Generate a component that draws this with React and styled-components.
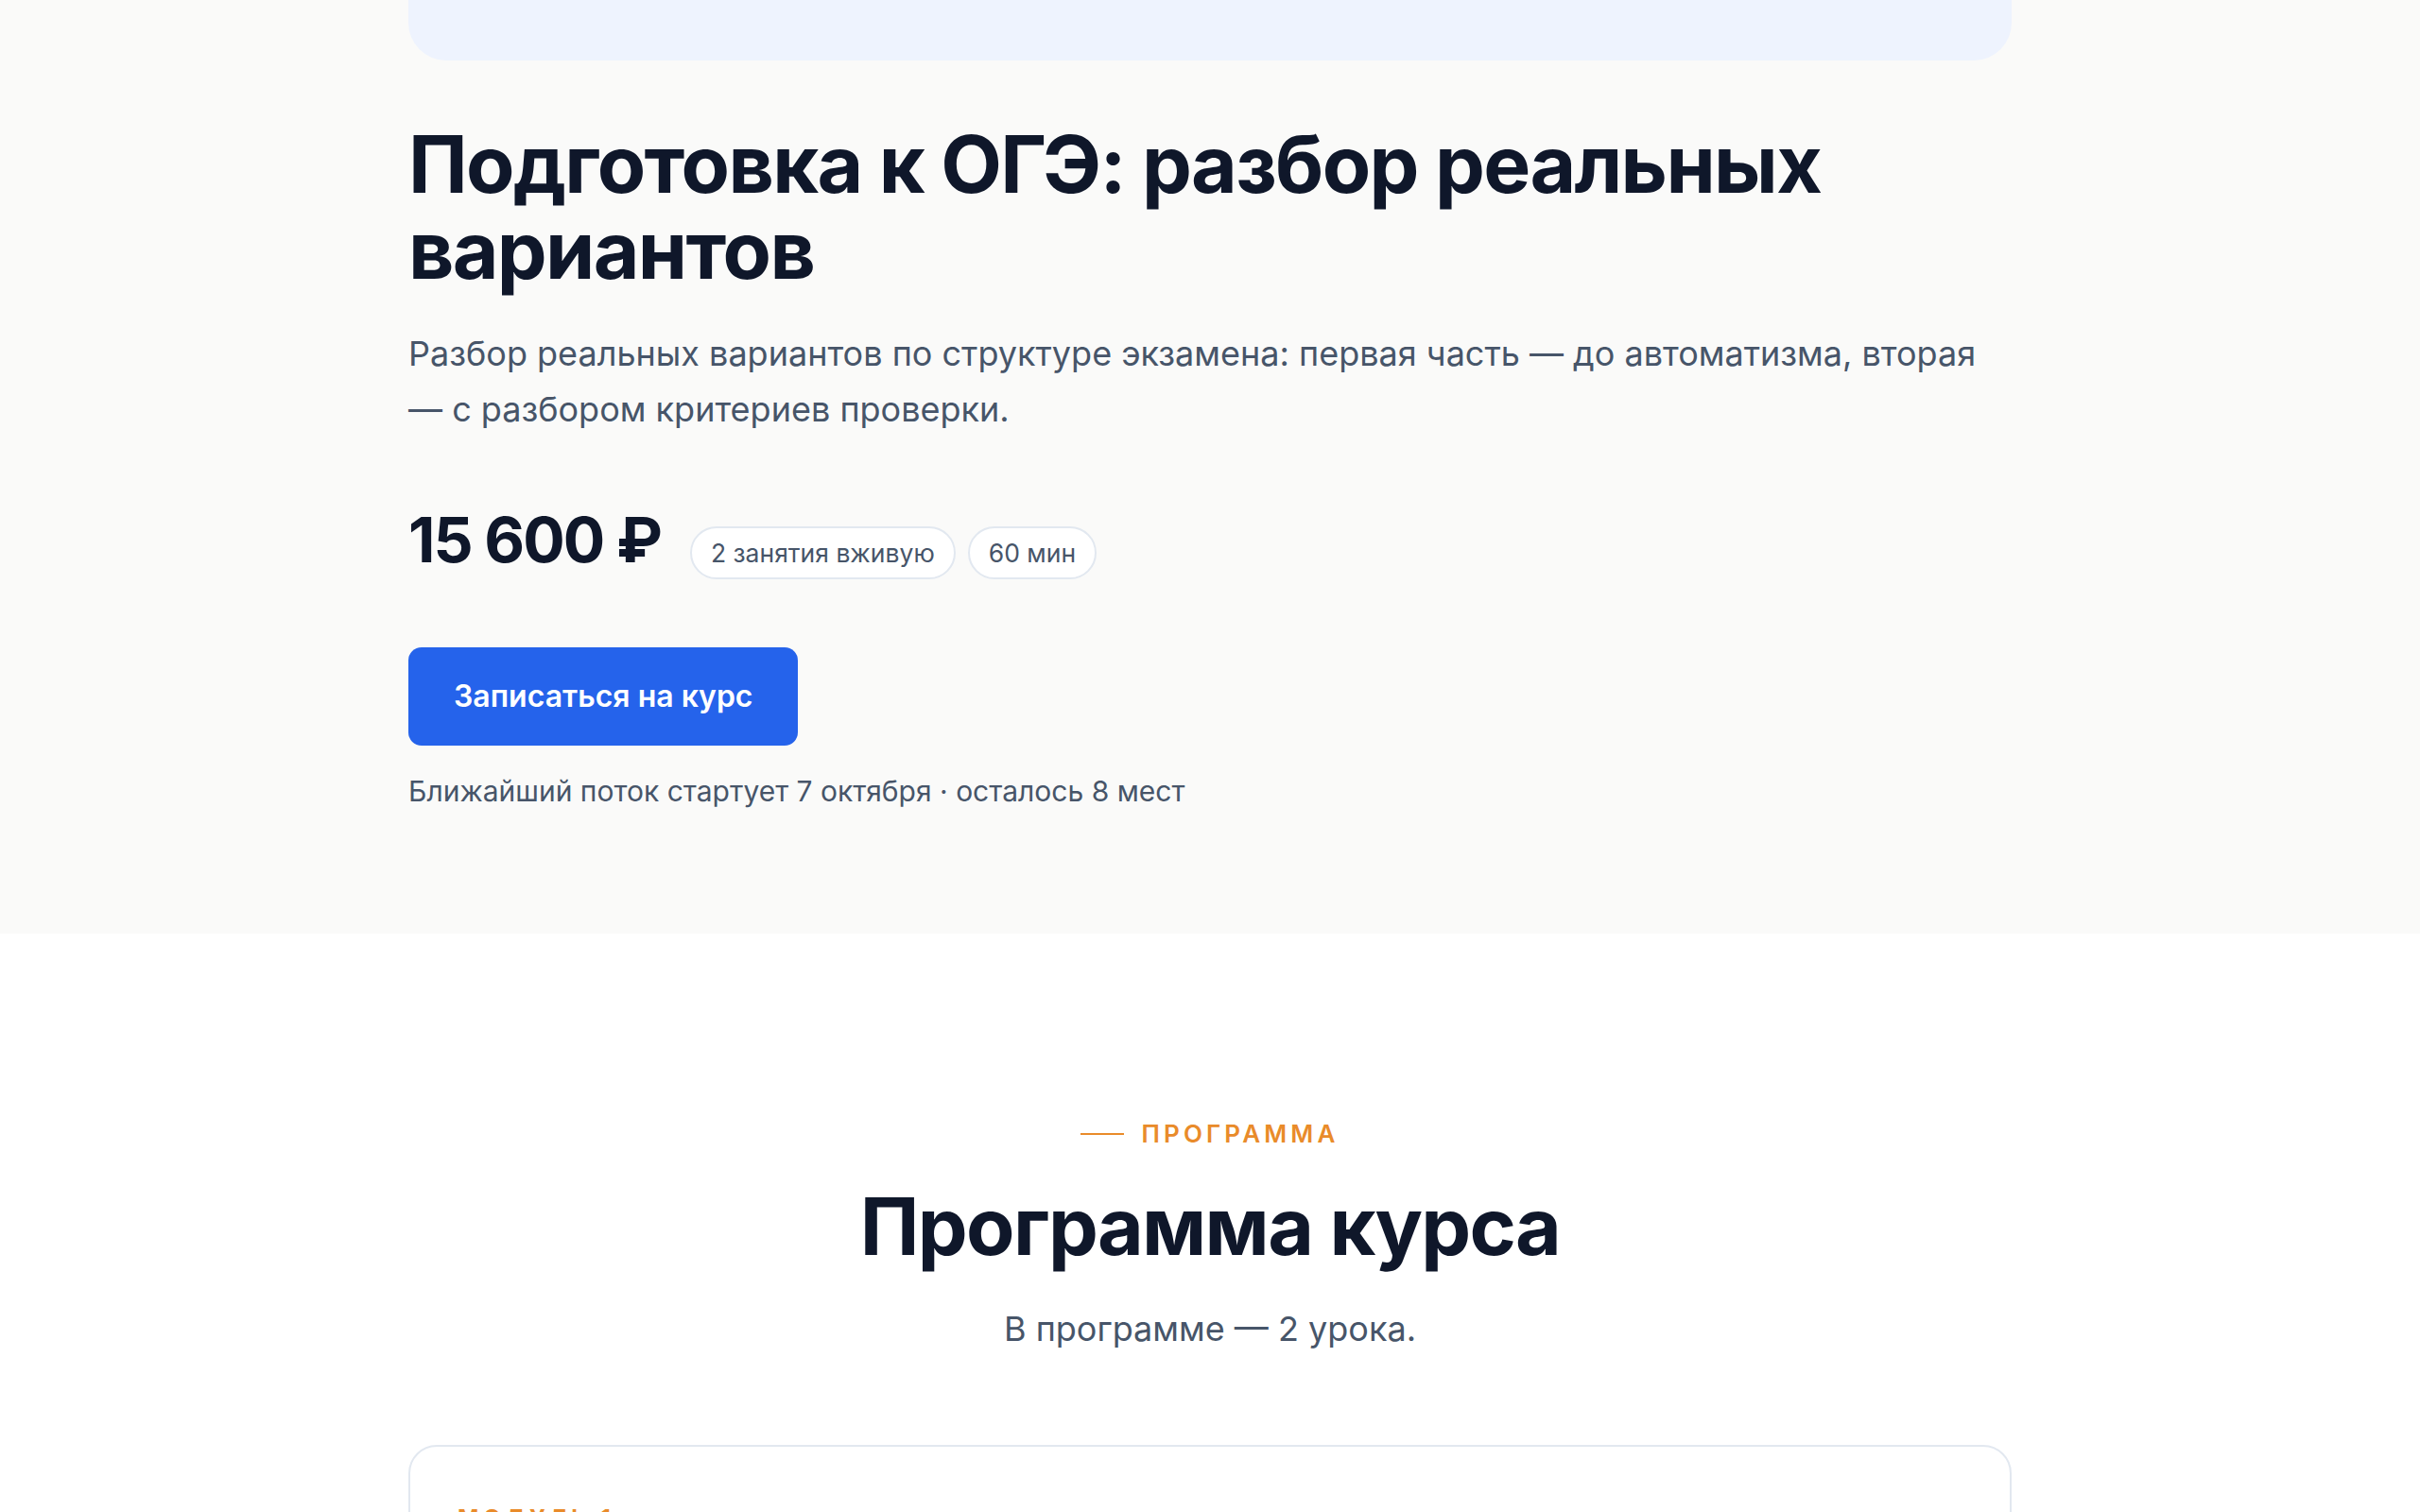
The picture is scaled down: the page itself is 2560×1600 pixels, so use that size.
import React from 'react'
import styled, { createGlobalStyle } from 'styled-components'

const GlobalStyle = createGlobalStyle`
  * { box-sizing: border-box; }
  body {
    margin: 0;
    background: #ffffff;
    font-family: Inter, "Noto Sans", "Liberation Sans", sans-serif;
    color: #0f172a;
    -webkit-font-smoothing: antialiased;
  }
`

const Container = styled.div`
  width: 1696px;
  margin: 0 auto;
`

const Hero = styled.section`
  background: #fafaf9;
  padding-bottom: 129px;
`

const Cover = styled.div`
  height: 64px;
  background: #eef3fe;
  border-radius: 0 0 40px 40px;
`

const Title = styled.h1`
  margin: 64px 0 0;
  font-size: 84px;
  line-height: 91px;
  font-weight: 700;
  letter-spacing: -0.02em;
  color: #0f172a;
  max-width: 1560px;
`

const Lead = styled.p`
  margin: 35px 0 0;
  font-size: 36px;
  line-height: 59px;
  color: #475569;
`

const PriceRow = styled.div`
  display: flex;
  align-items: baseline;
  gap: 13px;
  margin-top: 74px;
`

const Price = styled.div`
  font-size: 66px;
  line-height: 68px;
  font-weight: 700;
  letter-spacing: -0.03em;
  color: #0f172a;
  margin-right: 18px;
`

const Chip = styled.span`
  display: inline-block;
  padding: 9px 20px;
  border: 2px solid #e2e8f0;
  border-radius: 999px;
  background: #ffffff;
  font-size: 26.5px;
  line-height: 34px;
  color: #475569;
`

const EnrollButton = styled.button`
  display: inline-block;
  margin-top: 72px;
  padding: 34px 48px;
  border: 0;
  border-radius: 14px;
  background: #2563eb;
  color: #ffffff;
  font-family: inherit;
  font-size: 32px;
  line-height: 36px;
  font-weight: 600;
  cursor: pointer;
`

const Note = styled.p`
  margin: 26px 0 0;
  font-size: 30px;
  line-height: 44px;
  color: #475569;
`

const Program = styled.section`
  background: #ffffff;
  padding-top: 194px;
`

const Eyebrow = styled.div`
  display: flex;
  align-items: center;
  justify-content: center;
  gap: 18px;
  font-size: 26px;
  line-height: 36px;
  font-weight: 600;
  letter-spacing: 0.16em;
  text-transform: uppercase;
  color: ${props => props.color || '#e98b2a'};

  &::before {
    content: '';
    width: 46px;
    height: 2px;
    background: currentColor;
  }
`

const SectionTitle = styled.h2`
  margin: 35px 0 0;
  text-align: center;
  font-size: 84px;
  line-height: 90px;
  font-weight: 700;
  letter-spacing: -0.02em;
  color: #0f172a;
`

const SectionLead = styled.p`
  margin: 36px 0 0;
  text-align: center;
  font-size: 36px;
  line-height: 54px;
  color: #475569;
`

const ModuleCard = styled.div`
  margin-top: 96px;
  border: 2px solid #e2e8f0;
  border-radius: 30px;
  background: #ffffff;
  padding: 60px 50px;
  min-height: 300px;
`

const ModuleLabel = styled.div`
  font-size: 24px;
  line-height: 32px;
  font-weight: 700;
  letter-spacing: 0.2em;
  text-transform: uppercase;
  color: #e98b2a;
`

const chips = ['2 занятия вживую', '60 мин']

export default function App() {
  return (
    <>
      <GlobalStyle />
      <Hero>
        <Container>
          <Cover />
          <Title>Подготовка к ОГЭ: разбор реальных вариантов</Title>
          <Lead>
            Разбор реальных вариантов по структуре экзамена: первая часть — до автоматизма, вторая — с разбором критериев проверки.
          </Lead>
          <PriceRow>
            <Price>15 600 ₽</Price>
            {chips.map(chip => <Chip key={chip}>{chip}</Chip>)}
          </PriceRow>
          <EnrollButton>Записаться на курс</EnrollButton>
          <Note>Ближайший поток стартует 7 октября · осталось 8 мест</Note>
        </Container>
      </Hero>
      <Program>
        <Container>
          <Eyebrow>Программа</Eyebrow>
          <SectionTitle>Программа курса</SectionTitle>
          <SectionLead>В программе — 2 урока.</SectionLead>
          <ModuleCard>
            <ModuleLabel>Модуль 1</ModuleLabel>
          </ModuleCard>
        </Container>
      </Program>
    </>
  )
}
